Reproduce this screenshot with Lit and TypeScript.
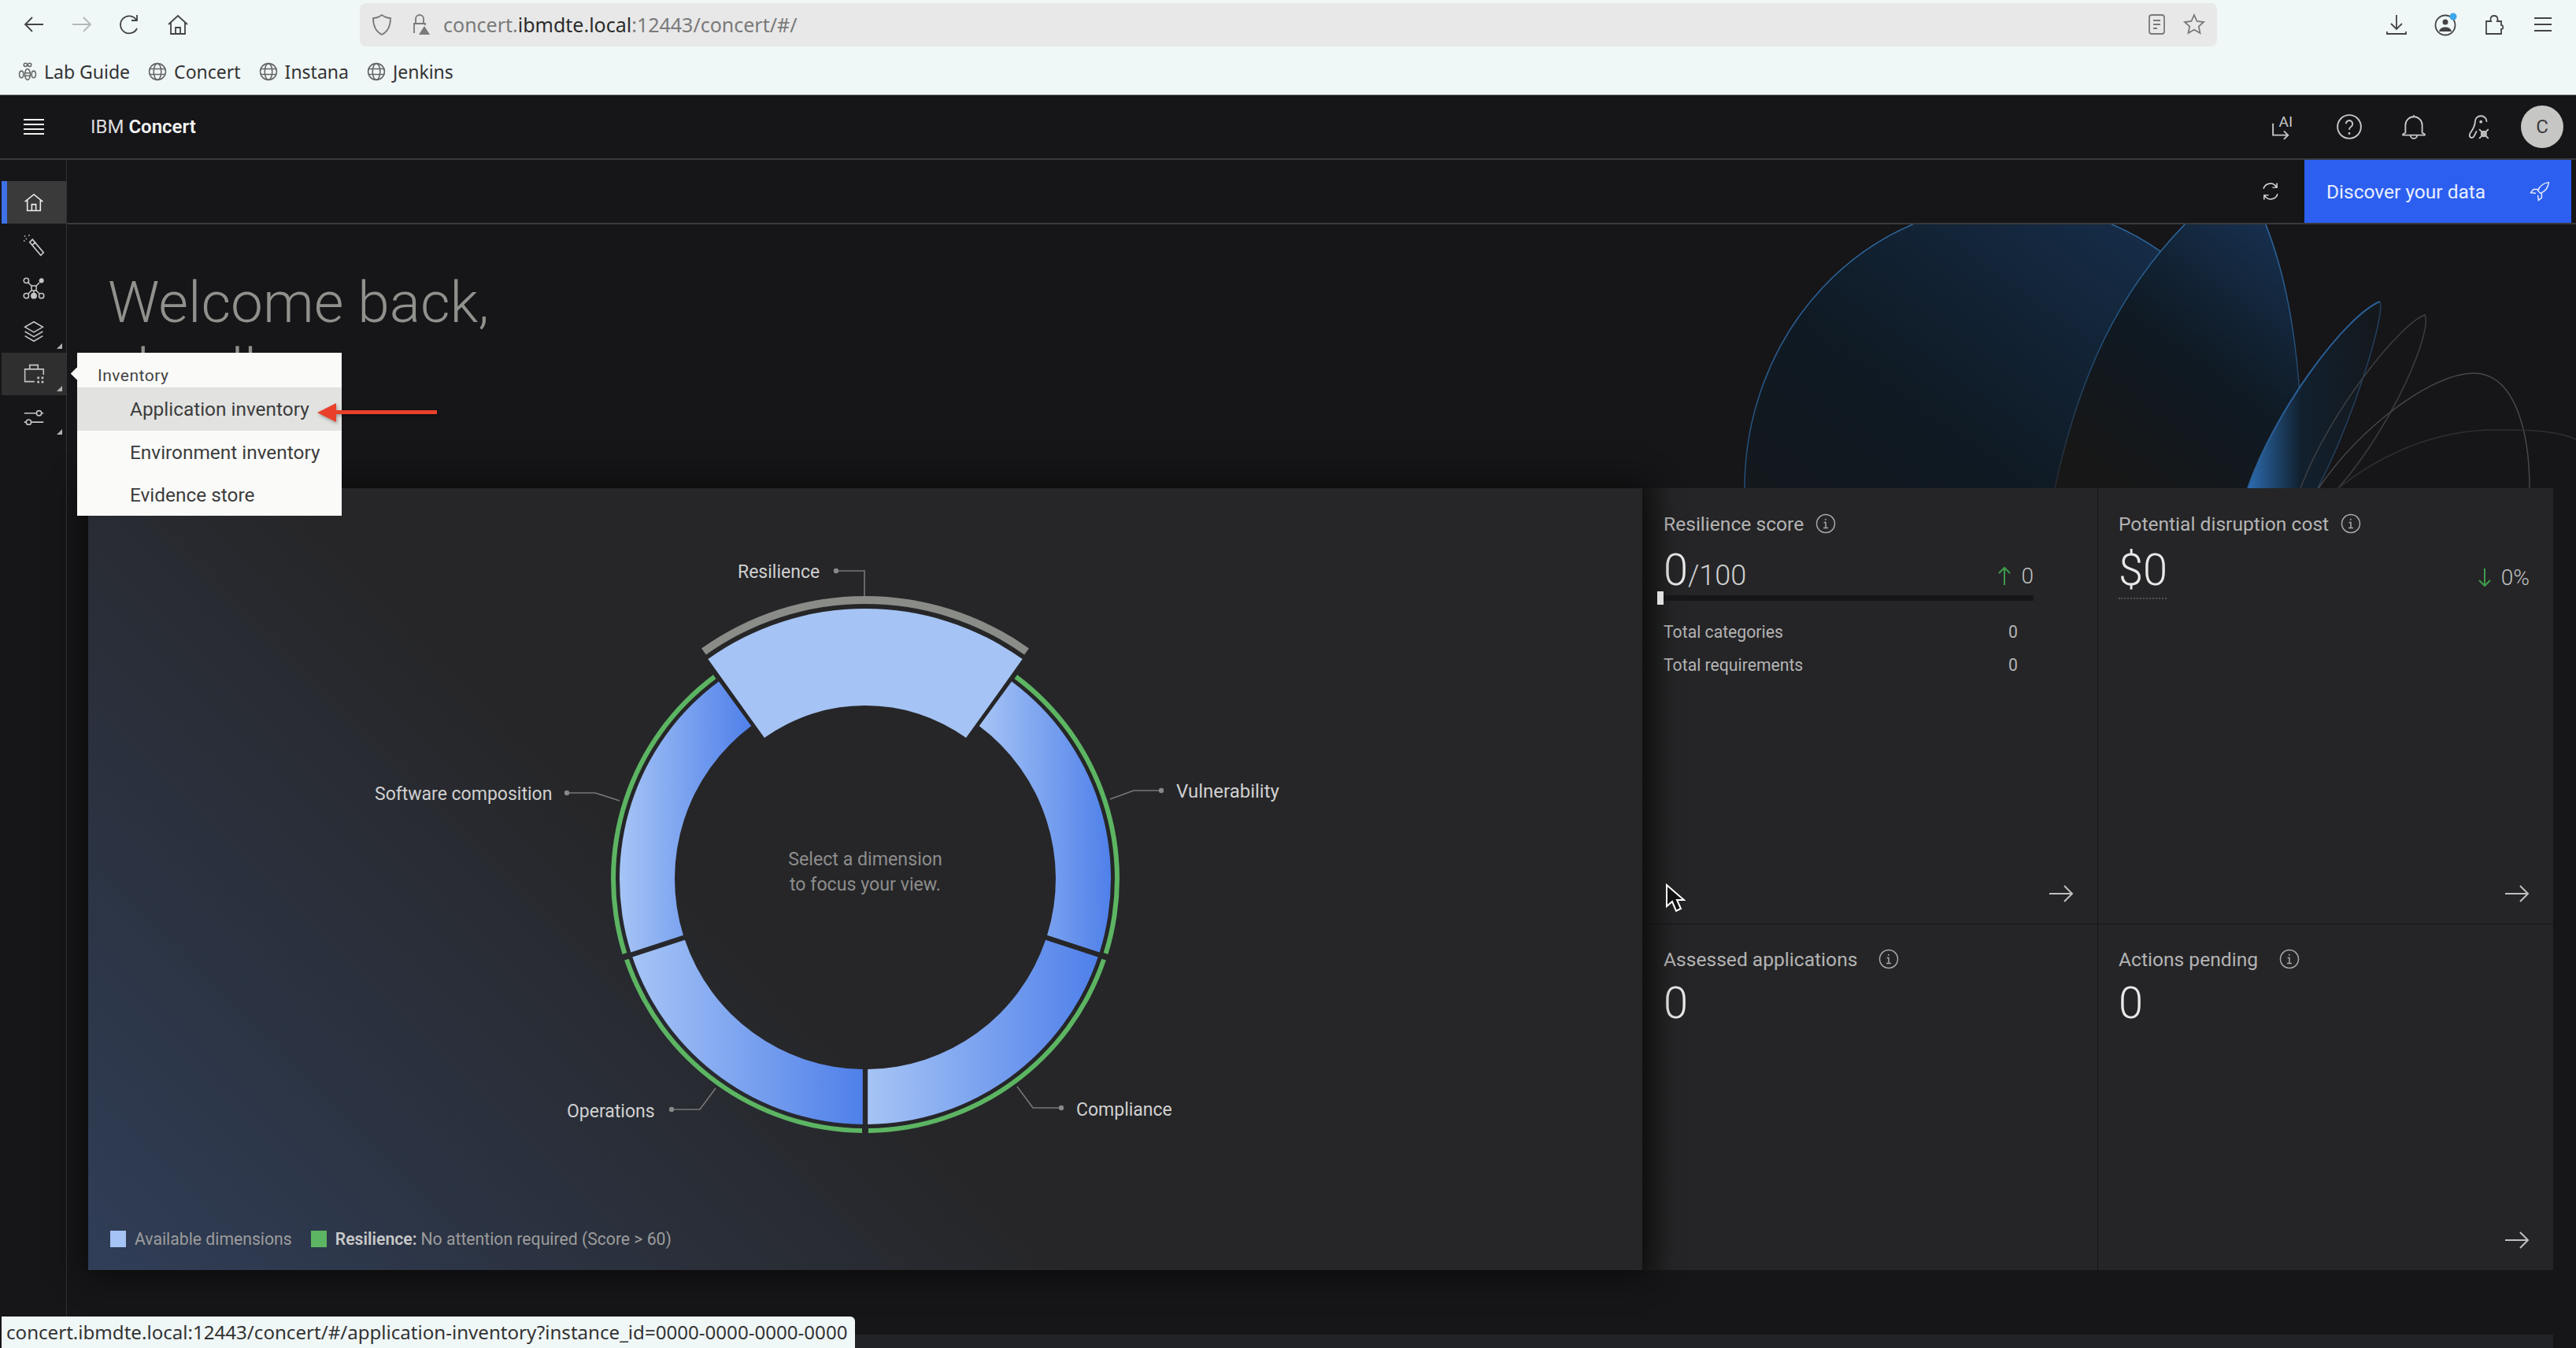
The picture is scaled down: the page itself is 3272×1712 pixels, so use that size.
import { LitElement, html, css, svg } from 'lit';
import { customElement } from 'lit/decorators.js';

const CX = 1099;
const CY = 1116;

function pt(deg: number, r: number) {
  const a = (deg * Math.PI) / 180;
  return `${(CX + r * Math.sin(a)).toFixed(1)} ${(CY - r * Math.cos(a)).toFixed(1)}`;
}

// ring segment, edges shifted g px off the radial line so the gap stays even
function seg(a0: number, a1: number, r0: number, r1: number, g = 0) {
  const off = (r: number) => (Math.asin(g / r) * 180) / Math.PI;
  return `M${pt(a0 + off(r1), r1)} A${r1} ${r1} 0 0 1 ${pt(a1 - off(r1), r1)} L${pt(a1 - off(r0), r0)} A${r0} ${r0} 0 0 0 ${pt(a0 + off(r0), r0)} Z`;
}

const ANGLES = [
  [36, 108],
  [108, 180],
  [180, 252],
  [252, 324],
];

const LEADERS = [
  { pts: '1062,725 1098,725 1098,757', dot: [1062, 725] },
  { pts: '1475,1004 1440,1004 1410,1015', dot: [1475, 1004] },
  { pts: '720,1007 756,1007 787,1017', dot: [720, 1007] },
  { pts: '853,1409 889,1409 909,1382', dot: [853, 1409] },
  { pts: '1348,1407 1312,1407 1292,1380', dot: [1348, 1407] },
];

const LABELS = [
  { t: 'Resilience', x: 937, y: 734, s: 23 },
  { t: 'Vulnerability', x: 1494, y: 1013, s: 24 },
  { t: 'Software composition', x: 476, y: 1016, s: 23 },
  { t: 'Operations', x: 720, y: 1419, s: 23 },
  { t: 'Compliance', x: 1367, y: 1417, s: 23 },
];

const ico = (w: number, body: unknown, vb = 32) =>
  html`<svg class="ico" width=${w} height=${w} viewBox="0 0 ${vb} ${vb}" fill="none" stroke="currentColor" stroke-width="1.8">${body}</svg>`;

const homeIcon = svg`<path d="M3 15 16 4.5 29 15M6.5 12.5V28h19V12.5M13 28v-9h6v9"/>`;
const info = html`<svg class="info" width="26" height="26" viewBox="0 0 26 26" fill="none" stroke="currentColor" stroke-width="1.5"><circle cx="13" cy="13" r="11.5"/><path d="M10 18.5h6M13 18.5V11.5h-2.4"/><circle cx="12.8" cy="7.8" r="1" fill="currentColor" stroke="none"/></svg>`;
const arrow = html`<svg class="go" width="32" height="24" viewBox="0 0 32 24" fill="none" stroke="currentColor" stroke-width="2"><path d="M1 12h29M20 2l10 10-10 10"/></svg>`;
const globe = ico(26, svg`<circle cx="15" cy="15" r="12"/><ellipse cx="15" cy="15" rx="5.5" ry="12"/><path d="M3 11h24M3 19h24"/>`, 30);

const RAIL = [
  { body: homeIcon, active: true },
  { body: svg`<path d="M10 11l4-4 16 19-4 4zM14.500 14.500l3.500-3.500M3 2v.1M9 1v.1M2 9v.1M5 6v.1" stroke-linecap="round" stroke-width="2"/>` },
  { body: svg`<circle cx="5" cy="5" r="3.600"/><circle cx="27" cy="5" r="2.600" fill="currentColor"/><circle cx="5" cy="27" r="3.600"/><circle cx="16" cy="27" r="3.600" fill="currentColor"/><circle cx="27" cy="27" r="3.600"/><rect x="12.500" y="12.500" width="7" height="7"/><path d="M8 8l4.500 4.500M24 8l-4.500 4.500M8 24l4.500-4.500M24 24l-4.500-4.500M16 19.500v4"/>`, },
  { body: svg`<path d="M16 2 29 9.500 16 17 3 9.500zM3 16l13 7.500 13-7.500M3 22.500l13 7.500 13-7.500"/>`, more: true },
  { body: svg`<path d="M17 27H3V9h27v8M10 9V3h12v6"/><path d="M21 20h3v3h-3zM27 20h3v3h-3zM21 26h3v3h-3zM27 26h3v3h-3z" fill="currentColor" stroke="none"/>`, more: true, open: true },
  { body: svg`<path d="M2 10h18M27 10h3M2 23h3M12 23h18"/><circle cx="23.500" cy="10" r="3.600"/><circle cx="8.500" cy="23" r="3.600"/>`, more: true },
];

@customElement('app-root')
export class AppRoot extends LitElement {
  static styles = css`
    :host {
      display: block;
      position: relative;
      width: 3272px;
      height: 1712px;
      overflow: hidden;
      background: #161518;
      font-family: Roboto, sans-serif;
      color: #c6c6c6;
    }
    .ico { display: block; flex: none; }

    .chrome {
      height: 120px;
      background: #f0f7f7;
      border-bottom: 1px solid #8a8a8a;
      font-family: 'Noto Sans', sans-serif;
      color: #444;
    }
    .toolbar { display: flex; align-items: center; height: 62px; padding-left: 28px; }
    .nav { display: flex; gap: 31px; }
    .dim { color: #b4b8b8; }
    .url {
      display: flex;
      align-items: center;
      width: 2359px;
      height: 55px;
      margin-left: 216px;
      padding: 0 14px 0 13px;
      box-sizing: border-box;
      background: #e8e8e8;
      border-radius: 8px;
      font-size: 25px;
      color: #7a7a7a;
    }
    .url b { font-weight: 400; color: #2b2b2b; }
    .url .addr { margin-left: 15px; flex: 1; }
    .url .ico + .ico { margin-left: 18px; }
    .tools { display: flex; gap: 32px; margin-left: 213px; }
    .marks { display: flex; align-items: center; height: 58px; padding-left: 22px; font-size: 23px; color: #333; }
    .mark { display: flex; align-items: center; gap: 8px; margin-right: 22px; }
    .mark .ico { color: #666; }

    .top {
      display: flex;
      align-items: center;
      height: 80px;
      border-bottom: 2px solid #39393b;
      padding: 0 16px 0 29px;
      color: #f0f0f0;
    }
    .brand { margin-left: 58px; font-size: 24px; white-space: nowrap; color: #dcdcdc; }
    .brand b { font-weight: 600; color: #f4f4f4; }
    .top-icons { display: flex; align-items: center; gap: 48px; margin-left: auto; color: #c6c6c6; }
    .avatar {
      width: 54px;
      height: 54px;
      border-radius: 50%;
      background: #c6c6c4;
      color: #3c3c3c;
      font-size: 24px;
      display: flex;
      align-items: center;
      justify-content: center;
      margin-left: -11px;
    }

    .body { display: flex; height: 1509px; }
    .rail {
      width: 82px;
      margin-left: 2px;
      border-right: 1px solid #323234;
      padding-top: 27px;
      flex: none;
    }
    .rail-item {
      position: relative;
      height: 54px;
      margin-bottom: 0.6px;
      display: flex;
      align-items: center;
      justify-content: center;
      color: #c4c4c4;
    }
    .rail-item.active { background: #3a3a3b; border-left: 7px solid #3f72e8; padding-right: 7px; color: #eee; box-sizing: border-box; }
    .rail-item.open { background: #2e2f2e; }
    .rail-item.more::after {
      content: '';
      position: absolute;
      right: 5px;
      bottom: 5px;
      border-style: solid;
      border-width: 0 0 7px 7px;
      border-color: transparent transparent #b0b0b0 transparent;
    }

    .main { flex: 1; min-width: 0; display: flex; flex-direction: column; position: relative; }
    .sub {
      display: flex;
      justify-content: flex-end;
      align-items: center;
      height: 82px;
      flex: none;
      border-bottom: 2px solid #39393b;
      box-sizing: border-box;
      padding-right: 6px;
    }
    .sync { color: #e0e0e0; margin-right: 30px; }
    .discover {
      display: flex;
      align-items: center;
      justify-content: space-between;
      box-sizing: border-box;
      width: 339px;
      height: 80px;
      padding: 0 27px 0 28px;
      background: #2c5ff0;
      color: #e8eeff;
      font-size: 24.5px;
    }

    .hero { position: relative; height: 335px; flex: none; }
    .art { position: absolute; left: 0; top: 0; }
    .hero h1 {
      position: relative;
      margin: 0;
      padding: 57px 0 0 52px;
      font-size: 73px;
      line-height: 85px;
      font-weight: 300;
      color: #8f928c;
    }

    .panels { display: flex; height: 993px; flex: none; margin-left: 27px; }
    .chart {
      width: 1974px;
      flex: none;
      display: flex;
      flex-direction: column;
      background: linear-gradient(225deg, #262628 58%, #303e58 100%);
      box-shadow: 0 0 36px 6px #0b0b0b;
      position: relative;
    }
    .chart svg { display: block; flex: none; }
    .chart text { font-family: Roboto, sans-serif; }
    .legend {
      display: flex;
      align-items: center;
      padding: 41px 0 0 28px;
      font-size: 21.2px;
      color: #9c9c9c;
    }
    .swatch { width: 20px; height: 21px; margin-right: 11px; flex: none; }
    .swatch.blue { background: #a5c3f4; }
    .swatch.green { background: #5cb562; margin-left: 24px; }
    .legend b { font-weight: 600; color: #c8c8c8; margin-right: 5px; }

    .cards {
      width: 1157px;
      flex: none;
      display: grid;
      grid-template-columns: 579px 578px;
      grid-template-rows: 554px 439px;
      background: #252527;
    }
    .card {
      display: flex;
      flex-direction: column;
      box-sizing: border-box;
      padding: 32px 30px 26px 27px;
      border-right: 1px solid #161618;
      border-bottom: 1px solid #161618;
      min-height: 0;
    }
    .card.first { background: linear-gradient(90deg, #1b1c1b, #252527 38px); }
    .card:nth-child(2n) { border-right: 0; padding-left: 26px; }
    .card:nth-child(n + 3) { border-bottom: 0; padding-top: 31px; }
    .head { display: flex; align-items: center; gap: 15px; height: 26px; font-size: 24.6px; color: #b4b4b4; white-space: nowrap; }
    .head.wide { gap: 27px; }
    .info { flex: none; color: #a8a8a8; }
    .go { margin-top: auto; align-self: flex-end; color: #c0c0c0; flex: none; }

    .score { width: 470px; margin-top: 20px; }
    .score-row { display: flex; align-items: baseline; height: 52px; color: #e4e4e4; }
    .big { font-size: 56px; line-height: 52px; font-weight: 300; color: #e8e8e8; }
    .of { font-size: 36px; font-weight: 300; color: #d0d0d0; }
    .trend { display: flex; align-items: center; gap: 13px; margin-left: auto; font-size: 28px; font-weight: 300; color: #c0c0c0; }
    .trend svg { color: #3f9b4c; }
    .track { position: relative; height: 7px; margin: 6px 0 0 -2px; background: #161518; }
    .thumb { position: absolute; left: -6px; top: -5px; width: 8px; height: 17px; background: #e0e0e0; }
    .stat { display: flex; justify-content: space-between; width: 450px; font-size: 21.2px; color: #b4b4b4; }
    .stat.one { margin-top: 27px; }
    .stat.two { margin-top: 17px; }
    .cost { display: flex; justify-content: space-between; align-items: flex-end; margin-top: 20px; height: 52px; }
    .dots { width: 61px; height: 0; margin-top: 9px; border-top: 2px dotted #555; }
    .plain { margin-top: 17px; }

    .next { height: 30px; margin: 82px 29px 0 27px; background: #222326; flex: none; }

    .menu {
      position: absolute;
      left: 98px;
      top: 448px;
      width: 336px;
      height: 207px;
      background: #fafbf9;
      color: #3c3c3c;
      font-size: 24.4px;
    }
    .menu::before {
      content: '';
      position: absolute;
      left: -6px;
      top: 21px;
      width: 11px;
      height: 11px;
      background: #fafbf9;
      transform: rotate(45deg);
    }
    .menu h2 { margin: 0; height: 44px; padding: 19px 0 0 26px; box-sizing: border-box; font-size: 21px; line-height: 20px; letter-spacing: 0.5px; font-weight: 400; color: #444; }
    .menu div { height: 54.5px; line-height: 56px; padding-left: 67px; }
    .menu .hot { background: #e2e3e1; }
    .pointer { position: absolute; left: 400px; top: 510px; filter: drop-shadow(1px 2px 2px #0005); }

    .status {
      position: absolute;
      left: 2px;
      bottom: 0;
      width: 1084px;
      height: 40px;
      box-sizing: border-box;
      padding-left: 6px;
      background: #f0f7f7;
      border-radius: 0 6px 0 0;
      font-family: 'Noto Sans', sans-serif;
      font-size: 24.1px;
      line-height: 40px;
      color: #333;
      white-space: nowrap;
    }
    .cursor { position: absolute; left: 2115px; top: 1122px; }
  `;

  private bg() {
    return html`<svg class="art" width="3187" height="335" viewBox="85 285 3187 335" fill="none">
      <defs>
        <linearGradient id="sky" x1="0.85" y1="0" x2="0.2" y2="0.95">
          <stop offset="0" stop-color="#17304f" />
          <stop offset="0.5" stop-color="#0f1a24" />
          <stop offset="1" stop-color="#171717" />
        </linearGradient>
        <linearGradient id="edge" x1="0" y1="0" x2="0" y2="1">
          <stop offset="0" stop-color="#2f6aa3" />
          <stop offset="0.55" stop-color="#224a70" />
          <stop offset="1" stop-color="#26282c" />
        </linearGradient>
        <linearGradient id="blade" x1="0" y1="0" x2="1" y2="0">
          <stop offset="0" stop-color="#2c6cb0" />
          <stop offset="0.4" stop-color="#12202e" />
          <stop offset="1" stop-color="#14181c" />
        </linearGradient>
      </defs>
      <ellipse cx="2556" cy="620" rx="340" ry="361" fill="url(#sky)" stroke="url(#edge)" stroke-width="1.5" />
      <path d="M2610 620C2640 480 2690 370 2780 280L2875 278C2905 350 2925 450 2925 620Z" fill="url(#sky)" />
      <path d="M2610 620C2640 480 2690 370 2780 280L2875 278C2905 350 2925 450 2925 620" stroke="url(#edge)" stroke-width="1.5" />
      <path d="M2855 620C2890 520 2980 400 3023 383C3030 400 2990 530 2944 620Z" fill="url(#blade)" />
      <path d="M2855 620C2890 520 2980 400 3023 383" stroke="#2a5f97" stroke-width="2" />
      <path d="M3023 383C3030 400 2990 530 2944 620" stroke="#23405e" stroke-width="1.5" />
      <path d="M2922 620C2960 520 3050 410 3080 400C3090 420 3040 540 2970 620" stroke="#3e3f42" stroke-width="1.5" />
      <path d="M2945 620C3000 540 3090 474 3142 474C3195 474 3213 550 3213 620" stroke="#48484b" stroke-width="1.5" />
      <path d="M2970 620C3020 580 3090 546 3169 546C3210 546 3245 546 3272 558" stroke="#2f3033" stroke-width="1.5" />
    </svg>`;
  }

  private donut() {
    return html`<svg width="1974" height="900" viewBox="112 620 1974 900" fill="none">
      <defs>
        <linearGradient id="petal" x1="0" y1="0" x2="1" y2="0">
          <stop offset="0" stop-color="#a6c4f5" />
          <stop offset="1" stop-color="#4f80ea" />
        </linearGradient>
      </defs>
      ${LEADERS.map(
        (l) => svg`<polyline points=${l.pts} stroke="#777" stroke-width="1.6" /><circle cx=${l.dot[0]} cy=${l.dot[1]} r="3.2" fill="#888" />`,
      )}
      ${ANGLES.map(
        ([a, b]) => svg`
          <path d=${seg(a, b, 242, 312, 3.2)} fill="url(#petal)" />
          <path d=${seg(a, b, 317, 323, 4)} fill="#5cb562" />`,
      )}
      <path d=${seg(-35.6, 35.6, 220, 343)} fill="#a5c3f4" />
      <path d=${seg(-35.4, 35.4, 349, 359)} fill="#8a8c88" />
      ${LABELS.map(
        (l) => svg`<text x=${l.x} y=${l.y} font-size=${l.s} fill="#d0d0d0">${l.t}</text>`,
      )}
      <text x=${CX} y="1099" font-size="23.2" fill="#8d8d8d" text-anchor="middle">Select a dimension</text>
      <text x=${CX} y="1131" font-size="23.2" fill="#8d8d8d" text-anchor="middle">to focus your view.</text>
    </svg>`;
  }

  render() {
    return html`
      <div class="chrome">
        <div class="toolbar">
          <div class="nav">
            ${ico(30, svg`<path d="M27 15H4M13 6l-9 9 9 9"/>`, 30)}
            <span class="dim">${ico(30, svg`<path d="M3 15h23M17 6l9 9-9 9"/>`, 30)}</span>
            ${ico(30, svg`<path d="M24 20a11 11 0 1 1-1-11M24 3v7h-7"/>`, 30)}
            ${ico(30, svg`<path d="M3 15 15 4l12 11M6 13v14h18V13M12 27v-8h6v8"/>`, 30)}
          </div>
          <div class="url">
            ${ico(30, svg`<path d="M15 3c4 3 7 4 11 4 0 10-3 17-11 21C7 24 4 17 4 7c4 0 7-1 11-4z"/>`, 30)}
            ${ico(30, svg`<path d="M8 26V14h14v2M10 14V8a5 5 0 0 1 10 0v6"/><path d="M21 17l7 11H14z" fill="currentColor" stroke="none"/>`, 30)}
            <span class="addr">concert.<b>ibmdte.local</b>:12443/concert/#/</span>
            ${ico(30, svg`<rect x="6" y="3" width="19" height="24" rx="3"/><path d="M11 10h9M11 15h9M11 20h5"/>`, 30)}
            ${ico(30, svg`<path d="M15 3l3.6 8 8.4 1-6.2 5.6 1.7 8.4-7.5-4.3L7.5 26l1.7-8.4L3 12l8.4-1z"/>`, 30)}
          </div>
          <div class="tools">
            ${ico(30, svg`<path d="M15 3v18M8 14l7 7 7-7M3 24v3h24v-3"/>`, 30)}
            <svg class="ico" width="30" height="30" viewBox="0 0 30 30" fill="none" stroke="currentColor" stroke-width="1.8"><circle cx="15" cy="16" r="12.5"/><circle cx="15" cy="12" r="3.5" fill="currentColor" stroke="none"/><path d="M7 24c1-4 4-5.500 8-5.500s7 1.500 8 5.500z" fill="currentColor" stroke="none"/><circle cx="25" cy="5" r="4.500" fill="#3ea6ea" stroke="none"/></svg>
            ${ico(30, svg`<path d="M5 27V11h6c-1-2-1-7 4-7s5 5 4 7h5v5c3-1 3 6 0 5v6z"/>`, 30)}
            ${ico(30, svg`<path d="M4 7h22M4 15h22M4 23h22"/>`, 30)}
          </div>
        </div>
        <div class="marks">
          <span class="mark">
            ${ico(26, svg`<circle cx="12" cy="5" r="2.500"/><circle cx="18" cy="5" r="2.500"/><ellipse cx="15" cy="19" rx="4" ry="8"/><path d="M11 17h8M11 21h8"/><ellipse cx="6" cy="19" rx="3" ry="5"/><ellipse cx="24" cy="19" rx="3" ry="5"/>`, 30)}
            Lab Guide
          </span>
          <span class="mark">${globe} Concert</span>
          <span class="mark">${globe} Instana</span>
          <span class="mark">${globe} Jenkins</span>
        </div>
      </div>

      <div class="top">
        ${ico(28, svg`<path d="M1 5h26M1 11h26M1 17h26M1 23h26" stroke-width="2"/>`, 28)}
        <div class="brand">IBM <b>Concert</b></div>
        <div class="top-icons">
          ${ico(34, svg`<path d="M2 12v14h18M15 21l5 5-5 5"/><text x="9" y="16" font-size="18" font-family="Roboto" fill="currentColor" stroke="none">AI</text>`)}
          ${ico(34, svg`<circle cx="16" cy="16" r="14"/><path d="M12 12.500a4 4 0 1 1 6 3.500c-1.500 1-2 1.800-2 3.500"/><circle cx="16" cy="24" r="1.300" fill="currentColor" stroke="none"/>`)}
          ${ico(34, svg`<path d="M16 2v3M6 23v-9a10 10 0 0 1 20 0v9l3 2v1H3v-1zM12 26a4 4 0 0 0 8 0"/>`)}
          ${ico(34, svg`<circle cx="19" cy="10" r="1.800" fill="currentColor" stroke="none"/><path d="M12 10a7 7 0 0 1 14 0M12 10c0 6-3 9-6 14-2 5 3 7 5 3l3-6"/><path d="M17 19l11 11M28 19l-11 11"/><circle cx="22.500" cy="24.500" r="2.800"/>`)}
          <div class="avatar">C</div>
        </div>
      </div>

      <div class="body">
        <div class="rail">
          ${RAIL.map(
            (r) => html`<div class="rail-item ${r.active ? 'active' : ''} ${r.open ? 'open' : ''} ${r.more ? 'more' : ''}">${ico(28, r.body)}</div>`,
          )}
        </div>
        <div class="main">
          <div class="sub">
            <span class="sync">${ico(26, svg`<path d="M5 12a11 11 0 0 1 20-3M26 3v7h-7M27 20a11 11 0 0 1-20 3M6 29v-7h7"/>`)}</span>
            <div class="discover">
              Discover your data
              ${ico(26, svg`<path d="M30 2c-8 1-14 5-17 13l4 4c8-3 12-9 13-17zM13 13H6l-4 5 8 1M19 19v7l-5 4-1-8"/>`)}
            </div>
          </div>
          <div class="hero">
            ${this.bg()}
            <h1>Welcome back,<br />shaull</h1>
          </div>
          <div class="panels">
            <div class="chart">
              ${this.donut()}
              <div class="legend">
                <span class="swatch blue"></span>Available dimensions
                <span class="swatch green"></span><b>Resilience:</b> No attention required (Score &gt; 60)
              </div>
            </div>
            <div class="cards">
              <div class="card first">
                <div class="head">Resilience score ${info}</div>
                <div class="score">
                  <div class="score-row">
                    <span class="big">0</span><span class="of">/100</span>
                    <span class="trend">
                      <svg width="16" height="24" viewBox="0 0 16 24" fill="none" stroke="currentColor" stroke-width="2"><path d="M8 24V2M1 9l7-7 7 7"/></svg>
                      0
                    </span>
                  </div>
                  <div class="track"><div class="thumb"></div></div>
                  <div class="stat one"><span>Total categories</span><span>0</span></div>
                  <div class="stat two"><span>Total requirements</span><span>0</span></div>
                </div>
                ${arrow}
              </div>
              <div class="card">
                <div class="head">Potential disruption cost ${info}</div>
                <div class="cost">
                  <span class="big">$0</span>
                  <span class="trend">
                    <svg width="16" height="24" viewBox="0 0 16 24" fill="none" stroke="currentColor" stroke-width="2"><path d="M8 0v22M1 15l7 7 7-7"/></svg>
                    0%
                  </span>
                </div>
                <div class="dots"></div>
                ${arrow}
              </div>
              <div class="card first">
                <div class="head wide">Assessed applications ${info}</div>
                <div class="big plain">0</div>
              </div>
              <div class="card">
                <div class="head wide">Actions pending ${info}</div>
                <div class="big plain">0</div>
                ${arrow}
              </div>
            </div>
          </div>
          <div class="next"></div>
        </div>
      </div>

      <div class="menu">
        <h2>Inventory</h2>
        <div class="hot">Application inventory</div>
        <div>Environment inventory</div>
        <div>Evidence store</div>
      </div>
      <svg class="pointer" width="160" height="28" viewBox="0 0 160 28"><path d="M3 14 27 2v9h128v5H27v10z" fill="#e8402a" /></svg>

      <div class="status">concert.ibmdte.local:12443/concert/#/application-inventory?instance_id=0000-0000-0000-0000</div>
      <svg class="cursor" width="26" height="38" viewBox="0 0 26 38"><path d="M2 2v27l7-6 5 12 6-3-5-11h9z" fill="#111" stroke="#fff" stroke-width="2" /></svg>
    `;
  }
}
